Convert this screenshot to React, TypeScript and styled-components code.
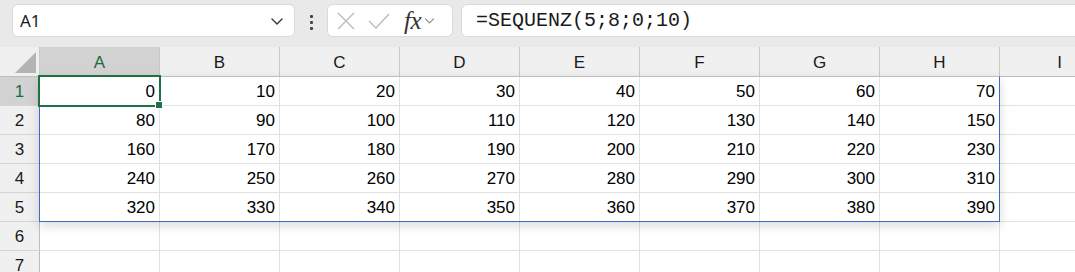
import React from 'react';
import styled, { createGlobalStyle } from 'styled-components';

const GlobalStyle = createGlobalStyle`
  html, body {
    margin: 0;
    padding: 0;
    background: #ffffff;
    overflow: hidden;
  }
  body {
    font-family: 'Liberation Sans', Arial, sans-serif;
  }
`;

const COLS = ['A', 'B', 'C', 'D', 'E', 'F', 'G', 'H'];
const ROWS = [1, 2, 3, 4, 5, 6, 7];

const Toolbar = styled.div`
  display: flex;
  align-items: flex-start;
  height: 47px;
  padding: 4px 0 0 12px;
  box-sizing: border-box;
  background: #e9e9e9;
  overflow: hidden;
`;

const Box = styled.div<{ w?: number; grow?: boolean }>`
  display: flex;
  align-items: center;
  height: 33px;
  box-sizing: border-box;
  background: #ffffff;
  border: 1px solid #dadada;
  border-radius: 6px;
  ${(p) => (p.w ? `width: ${p.w}px; flex: none;` : '')}
  ${(p) => (p.grow ? 'flex: 1; margin-right: -20px;' : '')}
`;

const NameText = styled.span`
  flex: 1;
  padding-left: 7px;
  font-family: 'Noto Sans', 'Liberation Sans', sans-serif;
  font-size: 17px;
  color: #1a1a1a;
`;

const Dots = styled.div`
  display: flex;
  flex-direction: column;
  gap: 3px;
  width: 32px;
  align-items: center;
  padding-top: 11px;

  & > i {
    display: block;
    width: 3px;
    height: 3px;
    border-radius: 1px;
    background: #444;
  }
`;

const Fx = styled.span`
  font-family: 'Liberation Serif', 'Times New Roman', serif;
  font-style: italic;
  font-size: 25px;
  line-height: 1;
  color: #333;
  margin-left: 14px;
  letter-spacing: -0.5px;
`;

const Formula = styled.span`
  padding-left: 14px;
  font-family: 'Liberation Mono', 'DejaVu Sans Mono', monospace;
  font-size: 20px;
  color: #1a1a1a;
`;

const Sheet = styled.div`
  position: relative;
  overflow: hidden;
`;

const Grid = styled.div`
  display: grid;
  grid-template-columns: 40px repeat(9, 120px);
`;

const ColHead = styled.div<{ active?: boolean }>`
  height: 30px;
  box-sizing: border-box;
  display: flex;
  align-items: center;
  justify-content: center;
  background: ${(p) => (p.active ? '#d2d2d2' : '#f0f0f0')};
  color: ${(p) => (p.active ? '#1e6b3f' : '#1a1a1a')};
  border-right: 1px solid #c8c8c8;
  border-bottom: 1px solid #bdbdbd;
  font-size: 17px;
  padding-top: 2px;
`;

const Corner = styled(ColHead)`
  justify-content: flex-end;
  align-items: flex-end;
  padding: 0 3px 3px 0;
`;

const RowHead = styled.div<{ active?: boolean }>`
  height: 29px;
  box-sizing: border-box;
  display: flex;
  align-items: center;
  justify-content: center;
  background: ${(p) => (p.active ? '#d2d2d2' : '#f0f0f0')};
  color: ${(p) => (p.active ? '#1e6b3f' : '#1a1a1a')};
  border-right: 1px solid #bdbdbd;
  border-bottom: 1px solid #d4d4d4;
  font-size: 17px;
  padding-top: 1px;
`;

const Cell = styled.div`
  height: 29px;
  box-sizing: border-box;
  display: flex;
  align-items: center;
  justify-content: flex-end;
  padding: 1px 4px 0 0;
  border-right: 1px solid #e1e1e1;
  border-bottom: 1px solid #e1e1e1;
  font-size: 17px;
  color: #000;
`;

const SpillRange = styled.div`
  position: absolute;
  left: 39px;
  top: 29px;
  width: 961px;
  height: 146px;
  box-sizing: border-box;
  border: 1px solid #3b6cc4;
  border-top-color: transparent;
  box-shadow: 0 4px 10px rgba(0, 0, 0, 0.14);
  pointer-events: none;
`;

const Selection = styled.div`
  position: absolute;
  left: 38px;
  top: 28px;
  width: 123px;
  height: 32px;
  box-sizing: border-box;
  border: 2px solid #1e7145;

  &::after {
    content: '';
    position: absolute;
    right: -4px;
    bottom: -4px;
    width: 6px;
    height: 6px;
    background: #1e7145;
    border: 1px solid #fff;
  }
`;

const Chevron = ({ size = 14, color = '#333' }: { size?: number; color?: string }) => (
  <svg width={size} height={size} viewBox="0 0 16 16" fill="none">
    <path d="M3 6l5 5 5-5" stroke={color} strokeWidth="1.4" strokeLinecap="round" strokeLinejoin="round" />
  </svg>
);

export default function App() {
  return (
    <>
      <GlobalStyle />
      <Toolbar>
        <Box w={283}>
          <NameText>A1</NameText>
          <span style={{ marginRight: 9, display: 'flex' }}>
            <Chevron size={16} />
          </span>
        </Box>
        <Dots>
          <i />
          <i />
          <i />
        </Dots>
        <Box w={126}>
          <svg width="20" height="20" viewBox="0 0 20 20" style={{ marginLeft: 8 }}>
            <path d="M2 2l16 16M18 2L2 18" stroke="#bcbcbc" strokeWidth="1.4" />
          </svg>
          <svg width="22" height="20" viewBox="0 0 22 20" style={{ marginLeft: 12 }}>
            <path d="M1 10l7 7L21 3" stroke="#bcbcbc" strokeWidth="1.4" fill="none" />
          </svg>
          <Fx>fx</Fx>
          <span style={{ display: 'flex', marginLeft: 2 }}>
            <Chevron size={13} color="#888" />
          </span>
        </Box>
        <div style={{ width: 8 }} />
        <Box grow>
          <Formula>=SEQUENZ(5;8;0;10)</Formula>
        </Box>
      </Toolbar>
      <Sheet>
        <Grid>
          <Corner>
            <svg width="21" height="21" viewBox="0 0 21 21">
              <path d="M21 0V21H0Z" fill="#b3b3b3" />
            </svg>
          </Corner>
          {COLS.map((c) => (
            <ColHead key={c} active={c === 'A'}>
              {c}
            </ColHead>
          ))}
          <ColHead>I</ColHead>
          {ROWS.map((r) => (
            <React.Fragment key={r}>
              <RowHead active={r === 1}>{r}</RowHead>
              {COLS.map((c, ci) => (
                <Cell key={c}>{r <= 5 ? (r - 1) * 80 + ci * 10 : ''}</Cell>
              ))}
              <Cell />
            </React.Fragment>
          ))}
        </Grid>
        <SpillRange />
        <Selection />
      </Sheet>
    </>
  );
}
